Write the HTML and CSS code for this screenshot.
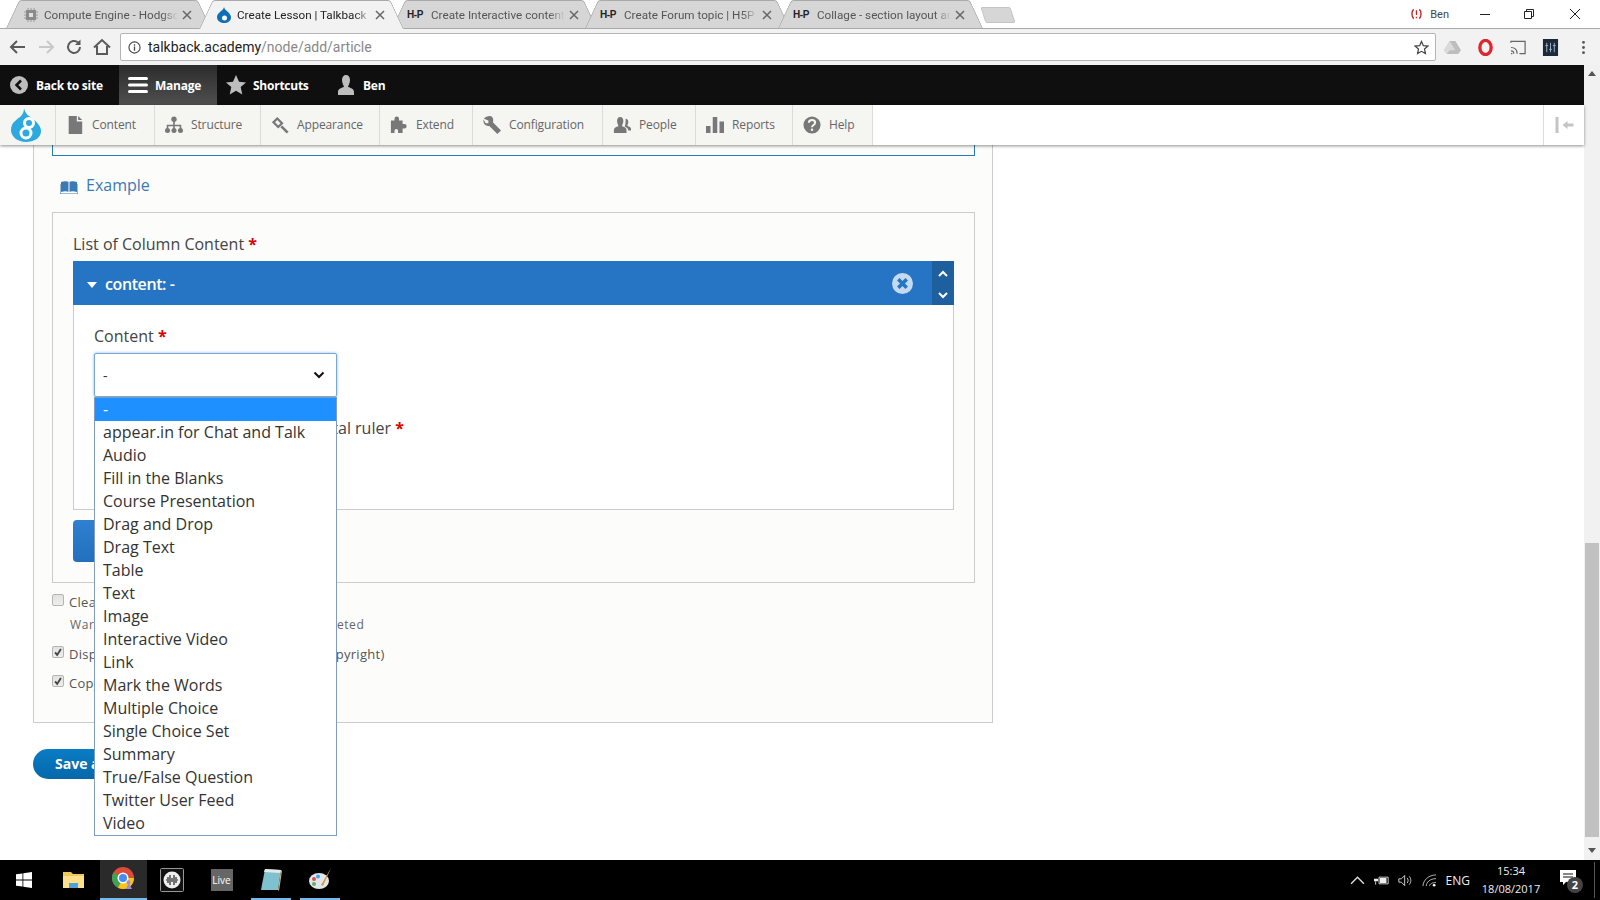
FILE: index.html
```html
<!DOCTYPE html>
<html lang="en">
<head>
<meta charset="utf-8">
<title>Create Lesson | Talkback</title>
<link rel="stylesheet" href="styles.css">
</head>
<body>
<header class="tabstrip">
  <div class="tab">
    <svg class="tab-icon" viewBox="0 0 16 16"><path d="M5 1v14M8 1v14M11 1v14M1 5h14M1 8h14M1 11h14" stroke="#9a9a9a" fill="none"/><rect x="3" y="3" width="10" height="10" fill="#8a8a8a"/><rect x="6" y="6" width="4" height="4" fill="#e0e0e0"/></svg>
    <span class="tab-title">Compute Engine - Hodgson</span>
    <svg class="tab-close" viewBox="0 0 10 10"><path d="M1 1l8 8M9 1l-8 8"/></svg>
  </div>
  <div class="tab active">
    <svg class="tab-icon" viewBox="0 0 16 16"><path d="M8 0c.5 2.500 2 3 4 5 1.800 1.800 3 3.500 3 5.500C15 14 12 16 8 16s-7-2.500-7-6c0-3 2.500-4.500 4-6C6.500 3 7.700 1.800 8 0z" fill="#0f6fb5"/><circle cx="8.500" cy="11" r="2.500" fill="#fff"/></svg>
    <span class="tab-title">Create Lesson | Talkback</span>
    <svg class="tab-close" viewBox="0 0 10 10"><path d="M1 1l8 8M9 1l-8 8"/></svg>
  </div>
  <div class="tab">
    <span class="tab-h5p">H-P</span>
    <span class="tab-title">Create Interactive content</span>
    <svg class="tab-close" viewBox="0 0 10 10"><path d="M1 1l8 8M9 1l-8 8"/></svg>
  </div>
  <div class="tab">
    <span class="tab-h5p">H-P</span>
    <span class="tab-title">Create Forum topic | H5P</span>
    <svg class="tab-close" viewBox="0 0 10 10"><path d="M1 1l8 8M9 1l-8 8"/></svg>
  </div>
  <div class="tab">
    <span class="tab-h5p">H-P</span>
    <span class="tab-title">Collage - section layout and</span>
    <svg class="tab-close" viewBox="0 0 10 10"><path d="M1 1l8 8M9 1l-8 8"/></svg>
  </div>
  <div class="newtab"></div>
  <div class="winctl">
    <div class="profile">
      <svg class="profile-icon" viewBox="0 0 14 14"><path d="M4 2C1.500 4 1.500 10 4 12M10 2c2.500 2 2.500 8 0 10" fill="none" stroke="#c62828" stroke-width="1.500"/><path d="M7 3v5M7 10v1.500" stroke="#c62828" stroke-width="1.500"/></svg>
      <span>Ben</span>
    </div>
    <svg class="win-btn" viewBox="0 0 46 14"><path d="M18 7.500h10" stroke="#222"/></svg>
    <svg class="win-btn" viewBox="0 0 46 14"><path d="M16.500 4.500h7v7h-7zM18.500 4.500v-2h7v7h-2" fill="none" stroke="#222"/></svg>
    <svg class="win-btn" viewBox="0 0 46 14"><path d="M16 2l10 10M26 2L16 12" fill="none" stroke="#222"/></svg>
  </div>
</header>

<nav class="toolbar">
  <svg class="nav-icon" viewBox="0 0 28 20"><path d="M21 10H8M13 4l-6 6 6 6" fill="none" stroke="#5a5a5a" stroke-width="2"/></svg>
  <svg class="nav-icon" viewBox="0 0 28 20"><path d="M7 10h13M15 4l6 6-6 6" fill="none" stroke="#c8c8c8" stroke-width="2"/></svg>
  <svg class="nav-icon" viewBox="0 0 28 20"><path d="M20 10a6 6 0 1 1-2-4.500" fill="none" stroke="#5a5a5a" stroke-width="2"/><path d="M20.500 2.500v5.500h-5.500z" fill="#5a5a5a"/></svg>
  <svg class="nav-icon" viewBox="0 0 28 20"><path d="M6 10.500L14 3l8 7.500M9 9v8h10V9" fill="none" stroke="#5a5a5a" stroke-width="2"/></svg>
  <div class="omnibox">
    <svg class="info-icon" viewBox="0 0 14 14"><circle cx="7" cy="7" r="6" fill="none" stroke="#444" stroke-width="1.200"/><path d="M7 6v4.500M7 3.500v1.500" stroke="#444" stroke-width="1.400"/></svg>
    <span class="url">talkback.academy<span class="url-path">/node/add/article</span></span>
    <svg class="star-icon" viewBox="0 0 16 16"><path d="M8 1.500l2 4.500 4.800.5-3.600 3.200 1 4.800L8 12.100l-4.200 2.400 1-4.800L1.200 6.500 6 6z" fill="none" stroke="#444" stroke-width="1.300"/></svg>
  </div>
  <div class="ext">
    <svg class="ext-icon" viewBox="0 0 18 16"><path d="M6 1h6l6 10-3 4H3l-3-4z" fill="#bdbdbd"/><path d="M6 1l6 10H6L3 15 0 11z" fill="#dadada"/></svg>
    <svg class="ext-icon" viewBox="0 0 18 18"><ellipse cx="9" cy="9" rx="6" ry="7.500" fill="none" stroke="#e0262d" stroke-width="3.500"/></svg>
    <svg class="ext-icon" viewBox="0 0 18 16"><path d="M1 3V1.500h15v13h-6M1 14.500h1.500M1 11.500c2 0 3 1 3 3M1 8c4 0 6.500 2.500 6.500 6.500" fill="none" stroke="#666" stroke-width="1.300"/></svg>
    <svg class="ext-icon" viewBox="0 0 16 18"><rect width="16" height="18" fill="#1b2a3a"/><path d="M4 4v10M8 4v10M12 4v10M2.500 7h3M6.500 11h3M10.500 7h3" stroke="#9fb4c6"/></svg>
    <svg class="ext-icon" viewBox="0 0 18 16"><circle cx="9" cy="2.500" r="1.500" fill="#555"/><circle cx="9" cy="8" r="1.500" fill="#555"/><circle cx="9" cy="13.500" r="1.500" fill="#555"/></svg>
  </div>
</nav>

<div class="viewport">
  <div class="page">
    <div class="adminbar">
      <div class="admin-item back">
        <svg class="admin-icon-sm" viewBox="0 0 18 18"><circle cx="9" cy="9" r="9" fill="#bdbdbd"/><path d="M11 4.500L6.500 9l4.500 4.500" fill="none" stroke="#111" stroke-width="2.500"/></svg>
        <span>Back to site</span>
      </div>
      <div class="admin-item manage">
        <svg class="admin-icon" viewBox="0 0 20 18"><path d="M1.500 2.500h17M1.500 9h17M1.500 15.500h17" stroke="#fff" stroke-width="3" stroke-linecap="round"/></svg>
        <span>Manage</span>
      </div>
      <div class="admin-item shortcuts">
        <svg class="admin-icon" viewBox="0 0 20 20"><path d="M10 0l3 6.800 7 .7-5.300 4.600 1.600 7.400L10 15.700 3.700 19.500l1.600-7.400L0 7.500l7-.7z" fill="#bdbdbd"/></svg>
        <span>Shortcuts</span>
      </div>
      <div class="admin-item user">
        <svg class="admin-icon" viewBox="0 0 20 20"><path d="M10 0c2.500 0 4 2 4 5s-1.500 5-2 7c3 .8 6 2 6 5v3H2v-3c0-3 3-4.200 6-5-.5-2-2-4-2-7s1.500-5 4-5z" fill="#bdbdbd"/></svg>
        <span>Ben</span>
      </div>
    </div>

    <div class="tray">
      <div class="tray-logo">
        <svg class="logo" viewBox="0 0 32 34"><path d="M14 0c1 6 5 8 9 11 5 4 8 8 8 12 0 7-7 11-15 11S1 29 1 22c0-8 7-11 10-14 2-2 3-5 3-8z" fill="#2ba9e0"/><circle cx="19" cy="15" r="4.500" fill="#2ba9e0" stroke="#fff" stroke-width="3"/><circle cx="16" cy="25" r="5" fill="#2ba9e0" stroke="#fff" stroke-width="3"/></svg>
      </div>
      <div class="tray-item">
        <svg class="tray-icon" viewBox="0 0 20 20"><path d="M3 0h9v6h6v14H3zM13.500 0L18 4.500h-4.500z" fill="#787878"/></svg>
        <span>Content</span>
      </div>
      <div class="tray-item">
        <svg class="tray-icon" viewBox="0 0 20 20"><circle cx="10" cy="3.500" r="3" fill="#787878"/><circle cx="2.800" cy="16" r="2.800" fill="#787878"/><circle cx="10" cy="16" r="2.800" fill="#787878"/><circle cx="17.200" cy="16" r="2.800" fill="#787878"/><path d="M10 5v11M2.800 15v-4.500h14.400V15" fill="none" stroke="#787878" stroke-width="1.800"/></svg>
        <span>Structure</span>
      </div>
      <div class="tray-item">
        <svg class="tray-icon" viewBox="0 0 20 20"><path d="M1 7l6-6 7 7-6 6z" fill="#787878"/><path d="M4.500 7L7 4.500l3.500 3.500L8 10.500z" fill="#f5f5f2"/><path d="M11.500 11.500l7 7" stroke="#787878" stroke-width="3"/></svg>
        <span>Appearance</span>
      </div>
      <div class="tray-item">
        <svg class="tray-icon" viewBox="0 0 20 20"><path d="M1 5h4V3a2.500 2.500 0 0 1 5 0v2h4v4h2a2.500 2.500 0 0 1 0 5h-2v5H9v-2.500a2 2 0 0 0-4 0V19H1z" fill="#787878"/></svg>
        <span>Extend</span>
      </div>
      <div class="tray-item">
        <svg class="tray-icon" viewBox="0 0 20 20"><path d="M7.500 0C5 0 2.500 1 1 3l5 2v3H3L.5 4C0 9 3 11.500 7 11l9 9 4-4-9-9c1-3 0-7-3.500-7z" fill="#787878"/></svg>
        <span>Configuration</span>
      </div>
      <div class="tray-item">
        <svg class="tray-icon" viewBox="0 0 20 20"><path d="M8 1c2.500 0 3.500 2 3.500 4.500S10 10 10 11.500c2.500.7 5 1.500 5 4V19H1v-3.500c0-2.500 2.500-3.300 5-4C6 10 4.500 8 4.500 5.500S5.500 1 8 1z" fill="#787878"/><path d="M14 3c2 0 3 1.500 3 3.500S16 9.500 16 11c2 .5 4 1.200 4 3v2h-3c0-2-2-3.500-4-4 .5-2 1-3.500 1-5.500 0-1.500 0-2.500 0-3.500z" fill="#787878"/></svg>
        <span>People</span>
      </div>
      <div class="tray-item">
        <svg class="tray-icon" viewBox="0 0 20 20"><path d="M0 11h5v8H0zM7.500 1h5v18h-5zM15 6h5v13h-5z" fill="#787878"/></svg>
        <span>Reports</span>
      </div>
      <div class="tray-item">
        <svg class="tray-icon" viewBox="0 0 20 20"><circle cx="10" cy="10" r="9.500" fill="#787878"/><path d="M6.500 7.500C6.500 5.500 8 4.500 10 4.500s3.500 1 3.500 3c0 2.500-3.500 2.500-3.500 5" fill="none" stroke="#f5f5f2" stroke-width="2.200"/><circle cx="10" cy="15.300" r="1.400" fill="#f5f5f2"/></svg>
        <span>Help</span>
      </div>
      <div class="tray-spacer"></div>
      <div class="tray-toggle">
        <svg class="toggle-icon" viewBox="0 0 20 16"><path d="M1 0h3v16H1zM8 8l5-4v2.500h6v3h-6V12z" fill="#c4c4c4"/></svg>
      </div>
    </div>

    <main class="main">
      <section class="card">
        <div class="stub"></div>
        <a class="example">
          <svg class="book" viewBox="0 0 18 14"><path d="M1 2c3-1 6-1 8 0 2-1 5-1 8 0v10c-3-1-6-1-8 0-2-1-5-1-8 0z" fill="#3a7ab5"/><path d="M9 2v10" stroke="#fff"/><path d="M0 4v10h7l2 0 2 0h7V4" fill="none" stroke="#3a7ab5"/></svg>
          <span>Example</span>
        </a>
        <div class="fieldset">
          <div class="label list-label">List of Column Content <b class="req">*</b></div>
          <div class="panel-head">
            <span class="caret"></span>
            <span class="panel-title">content: -</span>
            <svg class="remove" viewBox="0 0 20 20"><circle cx="10" cy="10" r="10" fill="#c3daf1"/><path d="M6 6l8 8M14 6l-8 8" stroke="#2575c4" stroke-width="3.400"/></svg>
            <div class="order">
              <svg class="order-icon" viewBox="0 0 12 8"><path d="M2 6l4-4 4 4" fill="none" stroke="#fff" stroke-width="2"/></svg>
              <svg class="order-icon" viewBox="0 0 12 8"><path d="M2 2l4 4 4-4" fill="none" stroke="#fff" stroke-width="2"/></svg>
            </div>
          </div>
          <div class="panel">
            <div class="label">Content <b class="req">*</b></div>
            <div class="select-wrap">
              <div class="select">
                <span>-</span>
                <svg class="chevron" viewBox="0 0 12 8"><path d="M1.500 1.500L6 6l4.500-4.500" fill="none" stroke="#111" stroke-width="2"/></svg>
              </div>
              <ul class="options">
                <li class="selected">-</li>
                <li>appear.in for Chat and Talk</li>
                <li>Audio</li>
                <li>Fill in the Blanks</li>
                <li>Course Presentation</li>
                <li>Drag and Drop</li>
                <li>Drag Text</li>
                <li>Table</li>
                <li>Text</li>
                <li>Image</li>
                <li>Interactive Video</li>
                <li>Link</li>
                <li>Mark the Words</li>
                <li>Multiple Choice</li>
                <li>Single Choice Set</li>
                <li>Summary</li>
                <li>True/False Question</li>
                <li>Twitter User Feed</li>
                <li>Video</li>
              </ul>
            </div>
            <div class="label ruler-label">Separate content with a horizontal ruler <b class="req">*</b></div>
          </div>
          <button class="add-btn">Add content</button>
        </div>

        <div class="check-row first">
          <span class="check"></span>
          <span>Clear content</span>
        </div>
        <div class="warning">Warning! If checked, this content will be deleted</div>
        <div class="check-row second">
          <span class="check on"><svg viewBox="0 0 12 12"><path d="M2.500 6.500L5 9.500l4.500-7" fill="none" stroke="#444" stroke-width="2.200"/></svg></span>
          <span>Display buttons (download, embed and copyright)</span>
        </div>
        <div class="check-row third">
          <span class="check on"><svg viewBox="0 0 12 12"><path d="M2.500 6.500L5 9.500l4.500-7" fill="none" stroke="#444" stroke-width="2.200"/></svg></span>
          <span>Copyright button</span>
        </div>
      </section>
      <button class="save">Save and publish</button>
    </main>
  </div>

  <aside class="scrollbar">
    <span class="arrow up"></span>
    <div class="track"><div class="thumb"></div></div>
    <span class="arrow down"></span>
  </aside>
</div>

<footer class="taskbar">
  <div class="task start">
    <svg class="win-logo" viewBox="0 0 16 16"><path d="M0 2.300l6.500-.9v6.200H0zM7.300 1.300L16 0v7.600H7.300zM0 8.400h6.500v6.200L0 13.700zM7.300 8.400H16V16l-8.700-1.300z" fill="#fff"/></svg>
  </div>
  <div class="task explorer">
    <svg class="task-icon" viewBox="0 0 22 20"><path d="M0 2h8l2 2h11v14H0z" fill="#f0c75e"/><path d="M0 6h21v12H0z" fill="#ffe08a"/><path d="M6 13h9v5H6z" fill="#4aa3df"/></svg>
  </div>
  <div class="task chrome">
    <svg class="task-icon" viewBox="0 0 24 24"><circle cx="11" cy="11" r="11" fill="#dd4b39"/><path d="M11 11L1.500 5.500A11 11 0 0 0 6 20.800z" fill="#3aa655"/><path d="M11 11l-5 9.800A11 11 0 0 0 22 11z" fill="#f5c518"/><circle cx="11" cy="11" r="5.500" fill="#fff"/><circle cx="11" cy="11" r="4" fill="#4a8af4"/><path d="M15 14a2 2 0 0 1 3 0c1 1 0 3-.5 3.500L20 22h-6l2-4.500c-1-.5-2-2-1-3.500z" fill="#a78bda"/></svg>
  </div>
  <div class="task recorder">
    <svg class="task-icon-lg" viewBox="0 0 24 24"><rect x=".5" y=".5" width="23" height="23" rx="1" fill="#111" stroke="#999"/><circle cx="12" cy="12" r="8.500" fill="#eee"/><path d="M6 12h1M8 9v6M10 7v10M12 10v4M14 7v10M16 9v6M18 12h-1" stroke="#222" stroke-width="1.200"/></svg>
  </div>
  <div class="task live">
    <span class="live-badge">Live</span>
  </div>
  <div class="task notepad pinned">
    <svg class="task-icon" viewBox="0 0 22 24"><path d="M5 2l16 1-3 20H1z" fill="#7fc2cf"/><path d="M5 2l16 1-.5 3L4 5z" fill="#e8e8e8"/><path d="M18 23l3-20 1 1-3 20z" fill="#d9b27c"/></svg>
  </div>
  <div class="task paint pinned">
    <svg class="task-icon" viewBox="0 0 24 24"><ellipse cx="11" cy="14" rx="10" ry="8" fill="#dfe7ec"/><circle cx="6" cy="12" r="2" fill="#e24b4b"/><circle cx="10" cy="9.500" r="2" fill="#3fa7e0"/><circle cx="6" cy="17" r="2" fill="#5db35d"/><path d="M23 1l-8 18-2-1z" fill="#d99a3c"/></svg>
  </div>
  <div class="systray">
    <svg class="sys-icon" viewBox="0 0 14 8"><path d="M1 7l6-6 6 6" fill="none" stroke="#ddd" stroke-width="1.300"/></svg>
    <svg class="sys-icon" viewBox="0 0 18 12"><path d="M6 2h11v8H6z" fill="none" stroke="#eee"/><path d="M7 3h8v6H7zM0 4h5v3H0zM2 1v3" fill="#eee"/><path d="M2 7v4" stroke="#eee"/></svg>
    <svg class="sys-icon" viewBox="0 0 18 14"><path d="M1 5h3l4-4v12l-4-4H1z" fill="none" stroke="#eee"/><path d="M11 4c1.500 1.500 1.500 4.500 0 6M13.500 2c2.500 3 2.500 7 0 10" fill="none" stroke="#eee"/></svg>
    <svg class="sys-icon" viewBox="0 0 16 14"><path d="M1 13C1 7 7 1 15 1M4.500 13c0-4 4-8 10.500-8M8 13c0-2 3-4 7-4" fill="none" stroke="#bbb"/><circle cx="13" cy="12" r="1.500" fill="#eee"/></svg>
    <span class="eng">ENG</span>
    <div class="clock"><span>15:34</span><span>18/08/2017</span></div>
    <div class="notif">
      <svg class="notif-icon" viewBox="0 0 16 16"><path d="M0 0h16v12H6l-3 3v-3H0z" fill="#fff"/><path d="M3 4h10M3 7h10" stroke="#111"/></svg>
      <span class="notif-badge">2</span>
    </div>
    <div class="desk-peek"></div>
  </div>
</footer>
</body>
</html>
```

FILE: styles.css
```css
* { box-sizing: border-box; }
html, body { height: 100%; }
body {
  margin: 0;
  display: flex;
  flex-direction: column;
  height: 900px;
  overflow: hidden;
  background: #fff;
  font-family: "Open Sans", "Liberation Sans", sans-serif;
  color: #444;
}
svg { display: block; flex: none; }

/* Browser tab strip */
.tabstrip {
  height: 29px;
  flex: none;
  display: flex;
  padding-left: 6px;
  background: #fff;
  border-bottom: 1px solid #a9a9a9;
  font-family: Roboto, "Liberation Sans", sans-serif;
  font-size: 11.7px;
}
.tab {
  position: relative;
  width: 205px;
  height: 28px;
  margin-right: -12px;
  display: flex;
  align-items: center;
  padding: 1px 0 0 17px;
  color: #555;
}
.tab::before, .tab::after {
  content: "";
  position: absolute;
  top: 0;
  bottom: 0;
  width: 55%;
  background: #d6d6d6;
  border-top: 1px solid #a9a9a9;
}
.tab::before {
  left: 0;
  transform-origin: bottom left;
  transform: skewX(-25deg);
  border-left: 1px solid #a9a9a9;
  border-radius: 3px 0 0 0;
}
.tab::after {
  right: 0;
  transform-origin: bottom right;
  transform: skewX(25deg);
  border-right: 1px solid #a9a9a9;
  border-radius: 0 3px 0 0;
}
.tab > * { position: relative; z-index: 1; }
.tab.active { z-index: 2; color: #222; height: 29px; padding-bottom: 1px; }
.tab.active::before, .tab.active::after { background: #f2f2f2; }
.tab-icon { width: 16px; height: 16px; margin-right: 5px; }
.tab-h5p {
  width: 20px;
  margin: 0 4px 0 -2px;
  font-family: "Liberation Sans", sans-serif;
  font-weight: 700;
  font-size: 10px;
  letter-spacing: -.4px;
  color: #222;
  white-space: nowrap;
}
.tab-title {
  width: 134px;
  overflow: hidden;
  white-space: nowrap;
  -webkit-mask-image: linear-gradient(90deg, #000 88%, transparent);
  mask-image: linear-gradient(90deg, #000 88%, transparent);
}
.tab-close {
  width: 10px;
  height: 10px;
  margin-left: 4px;
  fill: none;
  stroke: #666;
  stroke-width: 1.500;
}
.newtab {
  width: 30px;
  height: 16px;
  margin: 7px 0 0 12px;
  background: #d6d6d6;
  border: 1px solid #c4c4c4;
  border-radius: 2px;
  transform: skewX(18deg);
}
.winctl {
  margin-left: auto;
  display: flex;
  align-items: flex-start;
  padding-top: 7px;
}
.profile {
  display: flex;
  align-items: center;
  gap: 7px;
  margin-right: 13px;
  font-size: 11px;
  color: #444;
}
.profile-icon { width: 13px; height: 14px; }
.win-btn { width: 46px; height: 14px; }

/* Address bar */
.toolbar {
  height: 36px;
  flex: none;
  display: flex;
  align-items: center;
  padding: 0 0 0 4px;
  background: #f2f2f2;
  font-family: Roboto, "Liberation Sans", sans-serif;
}
.nav-icon { width: 28px; height: 20px; }
.omnibox {
  width: 1316px;
  height: 28px;
  margin-left: 4px;
  display: flex;
  align-items: center;
  padding: 0 6px 0 7px;
  background: #fff;
  border: 1px solid #b4b4b4;
  border-radius: 2px;
}
.info-icon { width: 13px; height: 13px; margin-right: 7px; }
.url { font-size: 14px; color: #222; }
.url-path { color: #888; }
.star-icon { width: 15px; height: 15px; margin-left: auto; }
.ext {
  display: flex;
  align-items: center;
  width: 164px;
  padding: 0 8px;
  justify-content: space-between;
}
.ext-icon { width: 17px; height: 17px; }

/* Viewport */
.viewport {
  flex: 1;
  min-height: 0;
  display: flex;
}
.page {
  flex: 1;
  min-width: 0;
  display: flex;
  flex-direction: column;
}

/* Admin toolbar */
.adminbar {
  height: 40px;
  flex: none;
  display: flex;
  background: #0f0f0f;
  font-family: "Open Sans", sans-serif;
  font-size: 12px;
  font-weight: 700;
  color: #fff;
  letter-spacing: -.25px;
}
.admin-item {
  display: flex;
  align-items: center;
}
.back { width: 119px; padding-left: 10px; gap: 8px; }
.manage {
  width: 98px;
  padding-left: 9px;
  gap: 7px;
  background: linear-gradient(#2c2c2c, #4f4f4f);
}
.shortcuts { width: 119px; padding-left: 9px; gap: 7px; }
.user { padding-left: 0; gap: 7px; }
.admin-icon-sm { width: 18px; height: 18px; }
.admin-icon { width: 20px; height: 20px; }
.manage .admin-icon { height: 18px; }

.tray {
  height: 40px;
  flex: none;
  position: relative;
  z-index: 3;
  display: grid;
  grid-template-columns: 56px 99px 106px 119px 93px 130px 93px 97px 80px 1fr 41px;
  background: #fff;
  box-shadow: 0 1px 3px rgba(0, 0, 0, .45);
  font-size: 12px;
  letter-spacing: -.12px;
  color: #666;
}
.tray-logo, .tray-item {
  display: flex;
  align-items: center;
  padding-bottom: 1px;
  background: #f5f5f2;
  border-right: 1px solid #dcdcdc;
}
.tray-logo { padding: 0 0 0 10px; }
.logo { width: 32px; height: 34px; }
.tray-item { padding-left: 10px; gap: 8px; }
.tray-icon { width: 18px; height: 18px; }
.tray-toggle {
  display: flex;
  align-items: center;
  padding-left: 10px;
  border-left: 1px solid #dcdcdc;
}
.toggle-icon { width: 21px; height: 16px; }

/* Page body */
.main {
  flex: 1;
  min-height: 0;
  padding-left: 33px;
  overflow: hidden;
}
.card {
  width: 960px;
  padding: 0 17px 29px 18px;
  background: #fcfcfa;
  border: 1px solid #ccc;
  border-top: 0;
  font-size: 13px;
}
.stub {
  height: 11px;
  border: 1px solid #2a7ab9;
  border-top: 0;
}
.example {
  display: flex;
  align-items: center;
  gap: 8px;
  height: 24px;
  margin-top: 17px;
  padding-left: 8px;
  font-size: 16px;
  color: #3a7ab5;
}
.book { width: 18px; height: 14px; margin-top: 3px; }
.fieldset {
  margin-top: 15px;
  padding: 19px 20px 20px;
  border: 1px solid #ccc;
}
.label {
  height: 24px;
  line-height: 24px;
  font-size: 16px;
  color: #444;
}
.req { color: #e00000; font-weight: 700; }
.panel-head {
  height: 44px;
  margin-top: 5px;
  display: flex;
  align-items: center;
  padding-left: 14px;
  background: #2575c4;
  color: #fff;
}
.caret {
  width: 0;
  height: 0;
  border: 5px solid transparent;
  border-top: 6px solid #fff;
  border-bottom: 0;
  margin: 3px 8px 0 0;
}
.panel-title { padding-top: 2px; font-size: 16px; font-weight: 600; letter-spacing: -.4px; }
.remove { width: 21px; height: 21px; margin-left: auto; margin-right: 19px; }
.order {
  width: 22px;
  align-self: stretch;
  display: flex;
  flex-direction: column;
  align-items: center;
  justify-content: space-between;
  padding: 9px 0 6px;
  background: #1e5f9e;
}
.order-icon { width: 12px; height: 8px; }
.panel {
  height: 205px;
  padding: 19px 20px 0;
  background: #fff;
  border: 1px solid #ccc;
  border-top: 0;
}
.select-wrap {
  position: relative;
  width: 243px;
  margin-top: 5px;
}
.select {
  height: 44px;
  display: flex;
  align-items: center;
  justify-content: space-between;
  padding: 0 11px 0 8px;
  background: #fff;
  border: 1px solid #7ba7d7;
  border-radius: 2px;
  box-shadow: 0 0 3px rgba(90, 150, 220, .7);
  font-size: 14px;
  color: #333;
}
.chevron { width: 12px; height: 8px; }
.options {
  position: absolute;
  top: 100%;
  left: 0;
  z-index: 5;
  width: 100%;
  margin: 0;
  padding: 0;
  list-style: none;
  background: #fff;
  border: 1px solid #7f9cc0;
  font-size: 16px;
  color: #333;
}
.options li {
  height: 23px;
  line-height: 23px;
  padding-left: 8px;
  white-space: nowrap;
}
.options li.selected { background: #1e90ff; color: #fff; }
.ruler-label { margin-top: 19px; }
.add-btn {
  display: block;
  width: 150px;
  height: 42px;
  margin-top: 10px;
  padding: 0;
  border: 0;
  border-radius: 4px;
  background: linear-gradient(#2f80d0, #2270bd);
  color: #fff;
  font: 600 14px "Open Sans", sans-serif;
}
.check-row {
  display: flex;
  height: 20px;
  line-height: 20px;
  color: #555;
  gap: 5px;
  letter-spacing: .3px;
}
.check-row.first { margin-top: 9px; }
.check-row.second { margin-top: 10px; }
.check-row.third { margin-top: 9px; }
.check {
  width: 12px;
  height: 12px;
  margin-top: 2px;
  background: linear-gradient(#e2e2e2, #eeeeee);
  border: 1px solid #b5b5b5;
  border-radius: 2px;
}
.check svg { width: 10px; height: 10px; }
.warning {
  height: 20px;
  line-height: 20px;
  margin-top: 3px;
  margin-bottom: -1px;
  padding-left: 18px;
  font-size: 12px;
  letter-spacing: .57px;
  color: #666;
}
.save {
  display: block;
  width: 170px;
  height: 30px;
  margin-top: 26px;
  padding: 0 0 2px 22px;
  border: 0;
  border-radius: 15px;
  background: linear-gradient(#0a7cc4, #0568ab);
  color: #fff;
  text-align: left;
  font: 700 14px "Open Sans", sans-serif;
}

/* Scrollbar */
.scrollbar {
  width: 16px;
  flex: none;
  display: flex;
  flex-direction: column;
  align-items: center;
  background: #f1f1f1;
}
.arrow {
  width: 0;
  height: 0;
  flex: none;
  border-left: 4px solid transparent;
  border-right: 4px solid transparent;
}
.arrow.up { margin: 6px 0 5px; border-bottom: 5px solid #555; }
.arrow.down { margin: 5px 0 7px; border-top: 5px solid #555; }
.track { flex: 1; width: 100%; display: flex; flex-direction: column; justify-content: flex-end; padding: 0 1px 6px 1px; }
.thumb { height: 294px; background: #c1c1c1; }

/* Windows taskbar */
.taskbar {
  height: 40px;
  flex: none;
  display: flex;
  align-items: stretch;
  background: #000;
  color: #eee;
  font-family: "Open Sans", "Liberation Sans", sans-serif;
}
.task {
  display: flex;
  align-items: center;
  justify-content: center;
}
.start { width: 48px; }
.win-logo { width: 16px; height: 16px; }
.explorer { width: 52px; }
.chrome {
  width: 47px;
  background: #2a2a2a;
  border-bottom: 2px solid #76b9ed;
}
.recorder { width: 50px; }
.live { width: 49px; }
.notepad { width: 40px; margin-left: 5px; }
.paint { width: 40px; margin-left: 9px; }
.pinned { border-bottom: 2px solid #76b9ed; }
.task-icon { width: 24px; height: 24px; }
.task-icon-lg { width: 24px; height: 24px; }
.explorer .task-icon { width: 22px; height: 20px; }
.live-badge {
  width: 22px;
  height: 22px;
  line-height: 22px;
  background: #666;
  color: #fff;
  font-size: 10px;
  text-align: center;
}
.systray {
  margin-left: auto;
  display: flex;
  align-items: center;
  font-size: 12px;
}
.sys-icon { width: 15px; height: 13px; margin-right: 9px; }
.eng { margin: 0 6px 0 0; }
.clock {
  width: 70px;
  display: flex;
  flex-direction: column;
  align-items: center;
  font-size: 11px;
  line-height: 18px;
}
.notif { position: relative; width: 20px; margin: 0 14px 0 14px; }
.notif-icon { width: 16px; height: 16px; margin-top: -4px; }
.notif-badge {
  position: absolute;
  left: 7px;
  top: 3px;
  width: 16px;
  height: 16px;
  line-height: 16px;
  border-radius: 50%;
  background: #444;
  color: #fff;
  font-size: 11px;
  font-weight: 700;
  text-align: center;
}
.desk-peek {
  width: 1px;
  height: 36px;
  margin-right: 5px;
  background: #555;
}
```
